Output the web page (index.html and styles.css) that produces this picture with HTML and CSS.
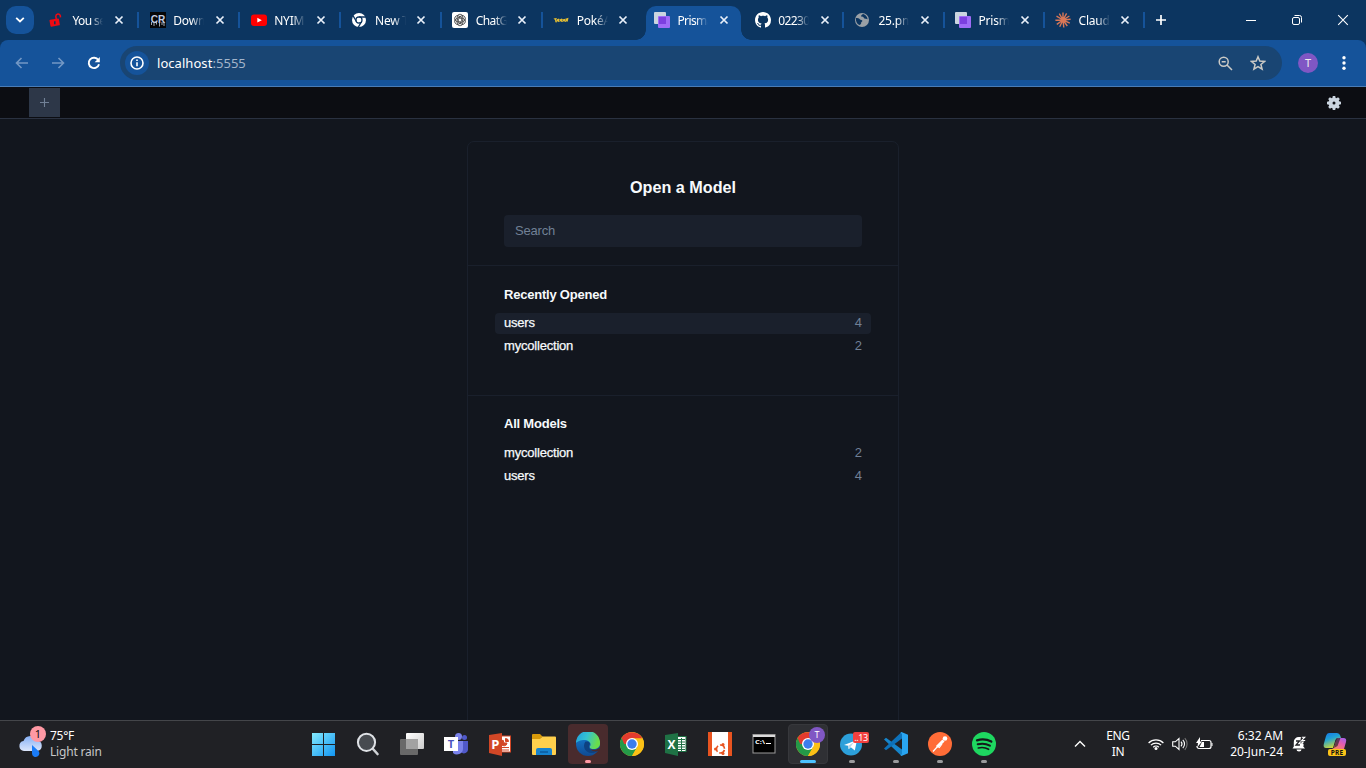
FILE: index.html
```html
<!DOCTYPE html>
<html lang="en">
<head>
<meta charset="utf-8">
<title>Prisma Studio</title>
<link rel="stylesheet" href="styles.css">
</head>
<body>
<svg class="defs" width="0" height="0" aria-hidden="true">
  <symbol id="x" viewBox="0 0 10 10"><path d="M1.500 1.500l7 7M8.500 1.500l-7 7" stroke="#e9f0fa" stroke-width="1.700" fill="none"/></symbol>
  <symbol id="prisma" viewBox="0 0 16 16"><rect width="12" height="12" rx="1" fill="#cbd5e0"/><rect x="4" y="4" width="12" height="12" rx="1" fill="#9f6bf7"/><rect x="5" y="5" width="7" height="7" fill="#7c3fe0"/></symbol>
  <symbol id="chrome" viewBox="0 0 24 24">
    <circle cx="12" cy="12" r="12" fill="#fbc116"/>
    <path d="M12 12L1.600 6A12 12 0 0 0 12 24l5.200-9z" fill="#249a48"/>
    <path d="M12 12H4.200L1.600 6A12 12 0 0 1 22.400 6.400L12 6.500z" fill="#e33b2e"/>
    <path d="M12 6.500h10.700A12 12 0 0 1 12 24l5.200-9z" fill="#fbc116"/>
    <circle cx="12" cy="12" r="6" fill="#fff"/><circle cx="12" cy="12" r="4.700" fill="#3b7ded"/>
  </symbol>
</svg>
<div class="screen">
  <header class="tabstrip">
    <button class="tab-search"><svg width="10" height="6" viewBox="0 0 10 6"><path d="M1.200.8L5 4.500 8.800.8" stroke="#fff" stroke-width="1.800" fill="none"/></svg></button>
    <div class="tabs">
      <div class="tab"><svg class="fav" viewBox="0 0 16 16"><g transform="rotate(-10 6 11)"><rect x="1" y="7" width="9.500" height="7" rx=".8" fill="#f00a12"/></g><path d="M7.300 7L6.800 4.300a2.300 2.300 0 0 1 4.500-.6l.2 1.700" stroke="#f00a12" stroke-width="1.500" fill="none"/><path d="M5.800 9.300v3" stroke="#0c3560" stroke-width="1.500"/></svg><span class="tight">You se</span><svg class="close"><use href="#x"/></svg></div>
      <div class="tab"><svg class="fav" viewBox="0 0 16 16"><rect width="16" height="16" fill="#050608"/><text x="8" y="10.500" text-anchor="middle" textLength="14.500" lengthAdjust="spacingAndGlyphs" class="cr">CR</text><path d="M1.500 10v3M4 10v4M6.500 10v2.500M9.500 10v4.500M12 10v3M14 10v4" stroke="#b8bdc8" stroke-width=".9"/></svg><span>Down</span><svg class="close"><use href="#x"/></svg></div>
      <div class="tab"><svg class="fav" viewBox="0 0 16 16"><rect y="2.500" width="16" height="11.500" rx="3" fill="#f00"/><path d="M6.300 5.800l4.500 2.400-4.500 2.400z" fill="#fff"/></svg><span>NYIM</span><svg class="close"><use href="#x"/></svg></div>
      <div class="tab"><svg class="fav" viewBox="0 0 16 16"><circle cx="8" cy="8" r="7" fill="#fff"/><g stroke="#0c3560" stroke-width="1.300" fill="none"><circle cx="8" cy="8" r="3"/><path d="M8 5h7M5.400 9.500L2 3.600M10.600 9.500L7.200 15.400"/></g><circle cx="8" cy="8" r="2.200" fill="#fff"/></svg><span>New T</span><svg class="close"><use href="#x"/></svg></div>
      <div class="tab"><svg class="fav" viewBox="0 0 16 16"><rect width="16" height="16" rx="2" fill="#fff"/><g stroke="#333" stroke-width=".75" fill="none"><g id="petal"><path d="M8 2.200a3 3 0 0 1 2.900 2.900v3.300L8 10.100M8 2.200a3 3 0 0 0-2.900 2.900v2.200"/></g><use href="#petal" transform="rotate(60 8 8)"/><use href="#petal" transform="rotate(120 8 8)"/><use href="#petal" transform="rotate(180 8 8)"/><use href="#petal" transform="rotate(240 8 8)"/><use href="#petal" transform="rotate(300 8 8)"/></g></svg><span class="tight">ChatG</span><svg class="close"><use href="#x"/></svg></div>
      <div class="tab"><svg class="fav" viewBox="0 0 16 16"><path d="M.5 6.600l3-.6.5 1.200 2-.6.600.8 2-.8 1.400.7 2.500-.6 3-.9-.8 4-1.200-.6-.6.700-2-.6-2 .7-1.500-.7-2.200.7-1.200-1-.4 1.500-1.200-.3-.4-2.200z" fill="#e3bd32"/><path d="M3 7.800h1M6 8.200h1M9 8.200h.8M12 7.900h.8" stroke="#2c4d70" stroke-width="1"/></svg><span>PokéA</span><svg class="close"><use href="#x"/></svg></div>
      <div class="tab active"><svg class="fav"><use href="#prisma"/></svg><span class="tight">Prisma</span><svg class="close"><use href="#x"/></svg></div>
      <div class="tab"><svg class="fav" viewBox="0 0 16 16"><path fill="#fff" d="M8 0C3.580 0 0 3.580 0 8c0 3.540 2.290 6.530 5.470 7.590.4.070.55-.17.55-.38 0-.19-.01-.82-.01-1.490-2.010.37-2.530-.49-2.690-.94-.09-.23-.48-.94-.82-1.130-.28-.15-.68-.52-.01-.53.63-.01 1.080.58 1.230.82.72 1.210 1.870.87 2.330.66.07-.52.28-.87.51-1.070-1.780-.2-3.640-.89-3.640-3.950 0-.87.31-1.590.82-2.150-.08-.2-.36-1.020.08-2.120 0 0 .67-.21 2.200.82.64-.18 1.320-.27 2-.27s1.360.09 2 .27c1.530-1.040 2.200-.82 2.200-.82.44 1.100.16 1.920.08 2.120.51.56.82 1.270.82 2.150 0 3.070-1.870 3.750-3.650 3.950.29.25.54.73.54 1.480 0 1.070-.01 1.930-.01 2.200 0 .21.15.46.55.38A8.010 8.010 0 0 0 16 8c0-4.420-3.580-8-8-8z"/></svg><span class="tight">02230</span><svg class="close"><use href="#x"/></svg></div>
      <div class="tab"><svg class="fav" viewBox="0 0 16 16"><circle cx="7" cy="8" r="7" fill="#9aa0a6"/><path d="M1 6c1.500 0 3 .2 3.800 1.200.6.900 2.400.4 2.600 1.500.2.800-1.300.9-1.200 2 .1.900-.7 1.900-1.800 2.300C1.800 12 .5 9 1 6zM8 2c-1 .8-2 1-1.800 2 .2.700 1.300.5 2 .9.900.6.500 1.700 1.700 1.700 1.200.1 1.500.8 2.700.7-.1-2.300-2.200-5-4.600-5.300z" fill="#0c3560"/></svg><span>25.pn</span><svg class="close"><use href="#x"/></svg></div>
      <div class="tab"><svg class="fav"><use href="#prisma"/></svg><span>Prism</span><svg class="close"><use href="#x"/></svg></div>
      <div class="tab"><svg class="fav" viewBox="0 0 16 16"><path d="M8 8V.5M8 8l3.600-6.600M8 8l6.400-4M8 8l7.600-.7M8 8l6.800 3.200M8 8l4.300 6M8 8l.8 7.500M8 8l-3.300 6.800M8 8l-6.200 4.300M8 8L.4 8.300M8 8L1.500 4.200M8 8L4.300 1.600" stroke="#d97757" stroke-width="1.400"/></svg><span>Claud</span><svg class="close"><use href="#x"/></svg></div>
    </div>
    <svg class="newtab" width="12" height="12" viewBox="0 0 12 12"><path d="M6 1v10M1 6h10" stroke="#fff" stroke-width="1.700"/></svg>
    <div class="controls">
      <svg viewBox="0 0 12 12"><path d="M1 6.500h10" stroke="#fff"/></svg>
      <svg viewBox="0 0 12 12"><g fill="none" stroke="#fff"><rect x="1.500" y="3.500" width="7" height="7" rx="1.500"/><path d="M3.500 1.500h5a2 2 0 0 1 2 2v5"/></g></svg>
      <svg viewBox="0 0 12 12"><path d="M1.200 1.200l9.600 9.600M10.800 1.200l-9.600 9.600" stroke="#fff" stroke-width="1.100"/></svg>
    </div>
  </header>
  <div class="toolbar-wrap">
  <nav class="toolbar">
    <div class="nav">
      <svg width="14" height="12" viewBox="0 0 14 12"><path d="M13 6H2M6.500 1L1.500 6l5 5" stroke="#7398c5" stroke-width="1.600" fill="none"/></svg>
      <svg width="14" height="12" viewBox="0 0 14 12"><path d="M1 6h11M7.500 1l5 5-5 5" stroke="#7398c5" stroke-width="1.600" fill="none"/></svg>
      <svg width="14" height="14" viewBox="0 0 14 14"><path d="M11.300 4A5.200 5.200 0 1 0 12 8.200" stroke="#fff" stroke-width="1.900" fill="none"/><path d="M12.800 1v5.200H7.700z" fill="#fff"/></svg>
    </div>
    <div class="omnibox">
      <div class="site-info"><svg width="14" height="14" viewBox="0 0 14 14"><circle cx="7" cy="7" r="6" fill="none" stroke="#fff" stroke-width="1.600"/><path d="M7 6.200v4M7 3.400V5" stroke="#fff" stroke-width="1.600"/></svg></div>
      <div class="url">localhost<i>:5555</i></div>
      <svg class="mag" width="15" height="15" viewBox="0 0 15 15"><g fill="none" stroke="#cbcac6" stroke-width="1.500"><circle cx="5.700" cy="5.700" r="4.500"/><path d="M9 9l5 5M3.700 5.700h4"/></g></svg>
      <svg class="star" width="16" height="16" viewBox="0 0 16 16"><path d="M8 1.800l1.800 4.300 4.700.4-3.600 3 1.200 4.600L8 11.600l-4.100 2.500 1.200-4.600-3.600-3 4.700-.4z" fill="none" stroke="#cbcac6" stroke-width="1.500"/></svg>
    </div>
    <div class="avatar">T</div>
    <svg class="kebab" width="4" height="16" viewBox="0 0 4 16"><g fill="#fff"><circle cx="2" cy="2.700" r="1.700"/><circle cx="2" cy="8" r="1.700"/><circle cx="2" cy="13.300" r="1.700"/></g></svg>
  </nav>
  </div>
  <main class="studio">
    <div class="studio-bar">
      <button class="studio-add"><svg width="9" height="9" viewBox="0 0 9 9"><path d="M4.500 0v9M0 4.500h9" stroke="#718096" stroke-width="1.100"/></svg></button>
      <svg class="gear" width="14" height="14" viewBox="0 0 14 14"><g fill="#cbd5e0"><circle cx="7" cy="7" r="5.300"/><g id="teeth"><path d="M5.800 0h2.400l.7 3H5.100zM5.800 14h2.400l.7-3H5.100z"/></g><use href="#teeth" transform="rotate(45 7 7)"/><use href="#teeth" transform="rotate(90 7 7)"/><use href="#teeth" transform="rotate(135 7 7)"/></g><circle cx="7" cy="7" r="1.500" fill="#0c0d12"/></svg>
    </div>
    <section class="card">
      <div class="head"><h1>Open a Model</h1><input class="search" type="text" placeholder="Search"></div>
      <div class="group recent"><h2>Recently Opened</h2>
        <div class="row selected"><b>users</b><span>4</span></div>
        <div class="row"><b>mycollection</b><span>2</span></div>
      </div>
      <div class="group"><h2>All Models</h2>
        <div class="row"><b>mycollection</b><span>2</span></div>
        <div class="row"><b>users</b><span>4</span></div>
      </div>
    </section>
  </main>
  <footer class="taskbar">
    <div class="weather">
      <svg width="32" height="32" viewBox="0 0 32 32"><defs><linearGradient id="cl" x2="0" y2="1"><stop stop-color="#86b0f5"/><stop offset="1" stop-color="#dce6fb"/></linearGradient></defs><path d="M7 23a5 5 0 0 1-.5-9.900 7.500 7.500 0 0 1 14-.5A5.300 5.300 0 0 1 20.500 23z" fill="url(#cl)"/><path d="M15 17l5.700 5.200a3.700 3.700 0 1 1-5.700 3z" fill="#1a7cf8"/></svg>
      <em>1</em>
      <div class="wtext"><div>75°F</div><div class="muted">Light rain</div></div>
    </div>
    <div class="apps">
      <div class="app"><svg viewBox="0 0 24 24"><defs><linearGradient id="wn" x2="1" y2="1"><stop stop-color="#84eafd"/><stop offset="1" stop-color="#1195f2"/></linearGradient></defs><path d="M0 1h11v11H0zM12 1h11v11H12zM0 13h11v11H0zM12 13h11v11H12z" fill="url(#wn)"/></svg></div>
      <div class="app"><svg viewBox="0 0 24 24"><path d="M17 17l4.500 5" stroke="#cfd2d6" stroke-width="2.600" stroke-linecap="round"/><circle cx="10.500" cy="10.300" r="8.600" fill="#474b50" stroke="#dfe2e6" stroke-width="2"/></svg></div>
      <div class="app"><svg viewBox="0 0 24 24"><defs><linearGradient id="tv" x2="1" y2="1"><stop stop-color="#fff"/><stop offset="1" stop-color="#ccc"/></linearGradient></defs><rect x="6" y="1" width="18" height="16" rx="1" fill="url(#tv)"/><rect y="7" width="18" height="16" rx="1" fill="#696969"/><path d="M6 7h12v10H6z" fill="#a2a2a2"/></svg></div>
      <div class="app"><svg viewBox="0 0 24 24"><circle cx="14.500" cy="4.500" r="3.500" fill="#7b83eb"/><circle cx="20.500" cy="5.500" r="2.500" fill="#5059c9"/><path d="M16 9h8v8a4 4 0 0 1-7 3z" fill="#5059c9"/><path d="M9 9h10v8a6 6 0 0 1-10 4z" fill="#7b83eb"/><rect y="5" width="14" height="14" fill="#fff"/><text x="7" y="16.200" text-anchor="middle" class="g" fill="#4b53bc" font-size="11">T</text></svg></div>
      <div class="app"><svg viewBox="0 0 24 24"><rect x="12" y="4" width="10.500" height="16" fill="#fff" stroke="#d24726"/><path d="M15 8a3 3 0 1 0 4 3h-3zM17.500 6.500v3h3a3 3 0 0 0-3-3zM14 15.500h7M14 18h7" fill="#d24726" stroke="#d24726"/><path d="M1 3l13-2v23L1 21z" fill="#d24726"/><text x="7.300" y="17" text-anchor="middle" class="g" fill="#fff" font-size="13">P</text></svg></div>
      <div class="app"><svg viewBox="0 0 24 24"><path d="M0 3a1 1 0 0 1 1-1h7l3 3h-1L8 8H0z" fill="#d89a0a"/><path d="M0 7h8l2.500-2.500H23a1 1 0 0 1 1 1V22a1 1 0 0 1-1 1H1a1 1 0 0 1-1-1z" fill="#ffd04c"/><path d="M4 23v-5a2 2 0 0 1 2-2h12a2 2 0 0 1 2 2v5z" fill="#1683ce"/><path d="M8 20h8" stroke="#0b5a9c" stroke-width="1.500"/></svg></div>
      <div class="app hot"><svg viewBox="0 0 24 24"><defs><linearGradient id="ed" x2="1" y2=".3"><stop stop-color="#1e9de0"/><stop offset=".5" stop-color="#35c2d0"/><stop offset="1" stop-color="#6ade4a"/></linearGradient><linearGradient id="eb" x2="0" y2="1"><stop stop-color="#1581d6"/><stop offset="1" stop-color="#104a92"/></linearGradient></defs><circle cx="12" cy="12" r="12" fill="url(#eb)"/><path d="M0 11A12 12 0 0 1 24 11c.3 4-3 6-6 6-3.500 0-5-1-4-2.700C16 11 12.500 8 8.500 8 4.500 8 1 9.500 0 11z" fill="url(#ed)"/><path d="M9.500 9.500C6 14 9 21 15.500 21c2 0 5-.7 6.500-2.300-2 .7-8 1.300-9-4-.3-1.700 1-2 1-3-.5-2-2.500-2.500-4.500-2.200z" fill="#0e4181"/><path d="M22.500 18.700c-3 1.300-7 .8-8.500-2 1.500 1.500 6 1.500 8.500-.5 2 .3 1.700 1.700 0 2.500z" fill="#492b2d"/></svg><i></i></div>
      <div class="app"><svg viewBox="0 0 24 24"><use href="#chrome"/></svg></div>
      <div class="app"><svg viewBox="0 0 24 24"><rect x="12" y="4.500" width="10" height="15" fill="#fff" stroke="#1f7245"/><path d="M14 7.500h7M14 10h7M14 12.500h7M14 15h7M14 17.500h7M17.500 6v13" stroke="#1f7245"/><path d="M1 3l13-2v23L1 21z" fill="#1f7245"/><text x="7.500" y="16.800" text-anchor="middle" class="g" fill="#fff" font-size="12">X</text></svg></div>
      <div class="app"><svg viewBox="0 0 24 24"><path fill="#fff" d="M0 0h24v24H0z"/><path fill="#e95420" d="M0 0h4v24H0zM20 0h4v24h-4z"/><g fill="none" stroke="#e95420" stroke-width="1.600"><circle cx="12.500" cy="17" r="4" stroke-dasharray="6.400 2" stroke-dashoffset="-1"/></g><g fill="#e95420"><circle cx="7.500" cy="17" r="1.500"/><circle cx="15" cy="12.500" r="1.500"/><circle cx="15" cy="21.500" r="1.500"/></g></svg></div>
      <div class="app"><svg viewBox="0 0 24 24"><rect x="1" y="2.500" width="22" height="18.500" fill="#000" stroke="#9a9a9a"/><path d="M1 4h22" stroke="#dadada" stroke-width="2"/><text x="3" y="12" textLength="10" lengthAdjust="spacingAndGlyphs" class="g" fill="#fff" font-size="6">C:\</text><path d="M14 11.500h5" stroke="#fff"/></svg></div>
      <div class="app current"><svg viewBox="0 0 24 24"><use href="#chrome"/></svg><b class="profile">T</b><i></i></div>
      <div class="app run"><svg viewBox="0 0 24 24"><circle cx="11" cy="12.500" r="11" fill="#2ca0da"/><path d="M4 13l13-5-2.200 10.500-4-3.200-2.200 2-.4-3.500z" fill="#fff"/><path d="M8.200 13.800L14 10l-3.500 5-1.600 1.800z" fill="#bcd7e8"/></svg><b class="count">..13</b><i></i></div>
      <div class="app run"><svg viewBox="0 0 24 24"><path d="M0 7.500l2-1.700L18 17.500v6L16.500 23z" fill="#1685cb"/><path d="M0 16.500l2 1.700L18 6.500v-6L16.500 1z" fill="#0d71b9"/><path d="M17.500 0L24 2.800v18.400L17.500 24l-1.300-1 1.800-.8V1.800L16.200 1z" fill="#29a5f1"/></svg><i></i></div>
      <div class="app run"><svg viewBox="0 0 24 24"><circle cx="12" cy="12" r="12" fill="#ff6c37"/><circle cx="17" cy="6.500" r="2.300" fill="#fff"/><path d="M15.500 8.500L9 15" stroke="#fff" stroke-width="3"/><path d="M10 14l-5 5.500M14 12l-3 4" stroke="#fff" stroke-width="1.200"/></svg><i></i></div>
      <div class="app run"><svg viewBox="0 0 24 24"><circle cx="12" cy="12" r="12" fill="#1ed760"/><g fill="none" stroke="#14181a" stroke-linecap="round"><path d="M5 8.300c4.500-1.300 10-1 14.300 1.300" stroke-width="2.300"/><path d="M5.700 12.300c4-1.100 8.500-.7 12.200 1.400" stroke-width="2"/><path d="M6.300 16c3.400-.9 7-.6 10.300 1.300" stroke-width="1.600"/></g></svg><i></i></div>
    </div>
    <div class="tray">
      <svg class="chev" width="12" height="8" viewBox="0 0 12 8"><path d="M1 6.500l5-5 5 5" stroke="#fff" stroke-width="1.400" fill="none"/></svg>
      <div class="lang">ENG<br>IN</div>
      <svg class="wifi" width="16" height="12" viewBox="0 0 16 12"><g fill="none" stroke="#fff" stroke-width="1.200"><path d="M.6 5a10.300 10.300 0 0 1 14.800 0M2.900 7.200a7.200 7.200 0 0 1 10.200 0M5.200 9.300a4 4 0 0 1 5.600 0"/></g><circle cx="8" cy="10.500" r="1.500" fill="#fff"/></svg>
      <svg class="vol" width="16" height="14" viewBox="0 0 16 14"><g fill="none" stroke="#fff" stroke-width="1.100"><path d="M.7 4.800h2.600L7 1.500v11L3.300 9.200H.7z"/><path d="M9 4.700a3.500 3.500 0 0 1 0 4.600M10.800 2.800a6 6 0 0 1 0 8.400"/><path d="M12.800 1.200a8.500 8.500 0 0 1 0 11.600" stroke="#777"/></g></svg>
      <svg class="bat" width="17" height="14" viewBox="0 0 17 14"><path d="M5 3.500h8a2 2 0 0 1 2 2v4a2 2 0 0 1-2 2H3a2 2 0 0 1-2-2V9" fill="none" stroke="#fff" stroke-width="1.200"/><path d="M15.500 6h1v3h-1zM6 5h2v5H3.500zM4 0L0 6h2l-.5 4L6 4.500H4z" fill="#fff"/></svg>
      <div class="clock">6:32 AM<br>20-Jun-24</div>
      <svg class="bell" width="14" height="16" viewBox="0 0 14 16"><path d="M.5 12.500l1.300-2V6a5 5 0 0 1 5-5h4.500v9.500l1.700 2zM4.500 13.500h5a2.500 2 0 0 1-5 0z" fill="#fff"/><path d="M4 5h3.500L4 9h4" fill="none" stroke="#202125" stroke-width="1.300"/><path d="M9 .5h5v7H8.500V4z" fill="#202125"/><path d="M9.800 1.200h3L9.800 4.500h3.400M8.500 6h2.700L8.700 9h3" fill="none" stroke="#fff" stroke-width="1.100"/></svg>
      <div class="copilot"><svg width="24" height="24" viewBox="0 0 24 24"><defs><linearGradient id="ca" x2=".4" y2="1"><stop stop-color="#1575e8"/><stop offset=".45" stop-color="#20a2d4"/><stop offset="1" stop-color="#c9d63c"/></linearGradient><linearGradient id="cb" x1="1" x2=".3" y2="1"><stop stop-color="#9a62f2"/><stop offset=".5" stop-color="#e45caf"/><stop offset="1" stop-color="#f98462"/></linearGradient></defs><path d="M6 1h8q2.500 0 3.200 2.500L18 6h-3q-2 0-2.600 2L10 16H3Q0 16 .8 12L3 4q.8-3 3-3z" fill="url(#ca)"/><path d="M18 6h2.500q3.500 0 2.500 4l-2 7H9l1.800-1 2.200-7q.8-3 3-3z" fill="url(#cb)"/><path d="M13 8.500q.6-2.500 3-2.500h1.500l-3 8-3.500 2z" fill="#202125" opacity=".65"/></svg><b>PRE</b></div>
    </div>
  </footer>
</div>
</body>
</html>
```
FILE: styles.css
```css
* { box-sizing: border-box; }
body { margin: 0; font-family: "Noto Sans", "Open Sans", sans-serif; overflow: hidden; }
svg { display: block; flex: none; }
button { border: 0; padding: 0; display: flex; align-items: center; justify-content: center; }
.defs { display: none; }
.screen { width: 1366px; height: 768px; display: flex; flex-direction: column; overflow: hidden; background: #12161e; }

/* Browser tabs */
.tabstrip { height: 40px; flex: none; display: flex; align-items: center; background: #0c3560; padding-left: 6px; }
.tab-search { width: 28px; height: 28px; border-radius: 10px; background: #15539a; }
.tabs { display: flex; height: 40px; margin-left: 4.600px; }
.tab { position: relative; width: 100.830px; height: 40px; display: flex; align-items: center; padding-left: 10.400px; color: #fff; font-size: 12px; }
.tab.active ~ .tab { width: 100.100px; }
.tab::after { content: ""; position: absolute; right: 0; top: 12px; width: 2px; height: 16px; background: #15539a; }
.tab > * { position: relative; z-index: 1; }
.tab.active::before { content: ""; position: absolute; left: 2.400px; right: 3.400px; top: 6px; bottom: 0; background: #15539a; border-radius: 10px 10px 0 0; }
.tab:nth-child(6)::after { right: -2.400px; top: 30px; width: 10px; height: 10px; background: radial-gradient(circle at 0 0, transparent 9.500px, #15539a 10px); }
.tab.active::after { right: -6.600px; top: 30px; width: 10px; height: 10px; background: radial-gradient(circle at 100% 0, transparent 9.500px, #15539a 10px); }
.fav { width: 16px; height: 16px; }
.tab span { width: 31px; margin-left: 7.500px; white-space: nowrap; letter-spacing: -.2px; -webkit-mask-image: linear-gradient(90deg, #000 60%, transparent); mask-image: linear-gradient(90deg, #000 60%, transparent); }
.tab span.tight { letter-spacing: -.6px; }
.close { width: 10px; height: 10px; margin-left: 10.500px; }
.newtab { margin-left: 10px; }
.controls { margin-left: auto; display: flex; gap: 34px; padding-right: 17px; }
.controls svg { width: 12px; height: 12px; }

/* Browser toolbar */
.toolbar-wrap { background: #0c3560; flex: none; }
.toolbar { height: 47px; background: #15539a; border-radius: 8px 8px 0 0; border-bottom: 1px solid #4a7cb5; display: flex; align-items: center; }
.nav { width: 120px; display: flex; align-items: center; gap: 22px; padding-left: 15px; }
.omnibox { width: 1162px; height: 34px; border-radius: 17px; background: #194573; display: flex; align-items: center; padding-left: 5px; }
.site-info { width: 24px; height: 24px; border-radius: 50%; background: #15539a; display: flex; align-items: center; justify-content: center; }
.url { margin-left: 8px; color: #fff; font-size: 13px; letter-spacing: .05px; }
.url i { font-style: normal; color: #a3b5cb; }
.mag { margin-left: auto; }
.star { margin: 0 16px 0 17px; }
.avatar { width: 20px; height: 20px; border-radius: 50%; background: #8057c4; color: #eee; font-size: 11px; line-height: 20px; text-align: center; margin-left: 16px; }
.kebab { margin-left: 24px; }

/* Prisma Studio */
.studio { flex: 1; min-height: 0; overflow: hidden; background: #12161e; font-family: "Liberation Sans", Arial, sans-serif; }
.studio-bar { height: 32px; background: #0c0d12; border-bottom: 1px solid #2a3140; display: flex; align-items: center; justify-content: space-between; padding: 0 25px 0 29px; }
.studio-add { width: 31px; height: 29px; background: #2d3748; }
.card { width: 432px; height: 700px; margin: 22px auto 0; border: 1px solid #1a202c; border-radius: 7px; color: #f7fafc; }
.head { height: 124px; border-bottom: 1px solid #1a202c; padding: 36px 36px 0; }
h1 { margin: 0; font-size: 16.200px; line-height: 19px; text-align: center; }
.search { display: block; width: 358px; height: 32px; margin-top: 18px; border: 0; border-radius: 4px; padding: 0 11px 1px; background: #1a202c; font: 13px "Liberation Sans", Arial, sans-serif; letter-spacing: -.2px; color: #f7fafc; }
.search::placeholder { color: #718096; opacity: 1; }
.group { padding: 19px 27px 0; }
.recent { height: 130px; border-bottom: 1px solid #1a202c; }
h2 { margin: 0 9px 10px; font-size: 13px; letter-spacing: -.22px; line-height: 18px; }
.recent h2 { padding-top: 1px; margin-bottom: 9px; }
.row { height: 21px; margin-bottom: 2px; border-radius: 4px; padding: 0 9px; display: flex; justify-content: space-between; font-size: 13px; line-height: 19px; }
.row.selected { background: #1a202c; }
.row b { font-weight: 500; letter-spacing: -.2px; -webkit-text-stroke: .25px #f7fafc; }
.row span { color: #718096; }

/* Taskbar */
.taskbar { position: relative; height: 48px; flex: none; background: #202125; border-top: 1px solid #44464a; padding-bottom: 1px; display: flex; align-items: center; color: #fff; font-size: 12px; line-height: 16px; }
.weather { position: relative; width: 303px; flex: none; display: flex; align-items: center; padding-left: 17px; }
.weather em { position: absolute; left: 30px; top: -2px; width: 16px; height: 16px; border-radius: 50%; background: #ff99a4; color: #111; font-style: normal; font-size: 11px; text-align: center; }
.wtext { margin-left: 1px; letter-spacing: -.3px; }
.muted { color: #c6c7c8; letter-spacing: -.2px; }
.apps { display: flex; gap: 4px; margin-left: 1px; }
.app { position: relative; width: 40px; height: 40px; border-radius: 4px; display: flex; align-items: center; justify-content: center; }
.app svg { width: 24px; height: 24px; }
.hot { background: #492b2d; }
.current { background: #2f3034; border: 1px solid #37383c; }
.app i { position: absolute; bottom: 1px; left: 17px; width: 6px; height: 3px; border-radius: 2px; background: #9b9b9d; }
.hot i { background: #ff99a4; }
.current i { left: 11px; bottom: 0; width: 16px; background: #4cc2ff; }
.profile { position: absolute; right: 2px; top: 2px; width: 16px; height: 16px; border-radius: 50%; background: #8057c4; font-size: 9px; font-weight: 400; text-align: center; line-height: 16px; }
.count { position: absolute; left: 21px; top: 8px; width: 16px; height: 11px; border-radius: 2px; background: #f1403f; font-size: 9px; line-height: 11px; font-weight: 400; letter-spacing: -.4px; text-align: center; }
.g { font-family: "Open Sans", sans-serif; font-weight: 700; }
.cr { font: 700 11px "Liberation Sans", sans-serif; fill: #c3cde2; }
.tray { margin-left: auto; display: flex; align-items: center; padding-right: 19px; }
.lang { width: 30px; margin-left: 17px; text-align: center; letter-spacing: -.3px; }
.wifi { margin-left: 15px; }
.vol { margin-left: 8px; }
.bat { margin-left: 8px; }
.clock { width: 60px; margin-left: 10px; text-align: right; white-space: nowrap; letter-spacing: -.05px; }
.bell { margin-left: 9px; }
.copilot { position: relative; margin-left: 17px; }
.copilot b { position: absolute; left: 5px; bottom: 0; width: 18px; height: 7px; border-radius: 2px; background: #fcc419; color: #111; font-size: 6.500px; line-height: 7px; text-align: center; letter-spacing: .2px; }
```
